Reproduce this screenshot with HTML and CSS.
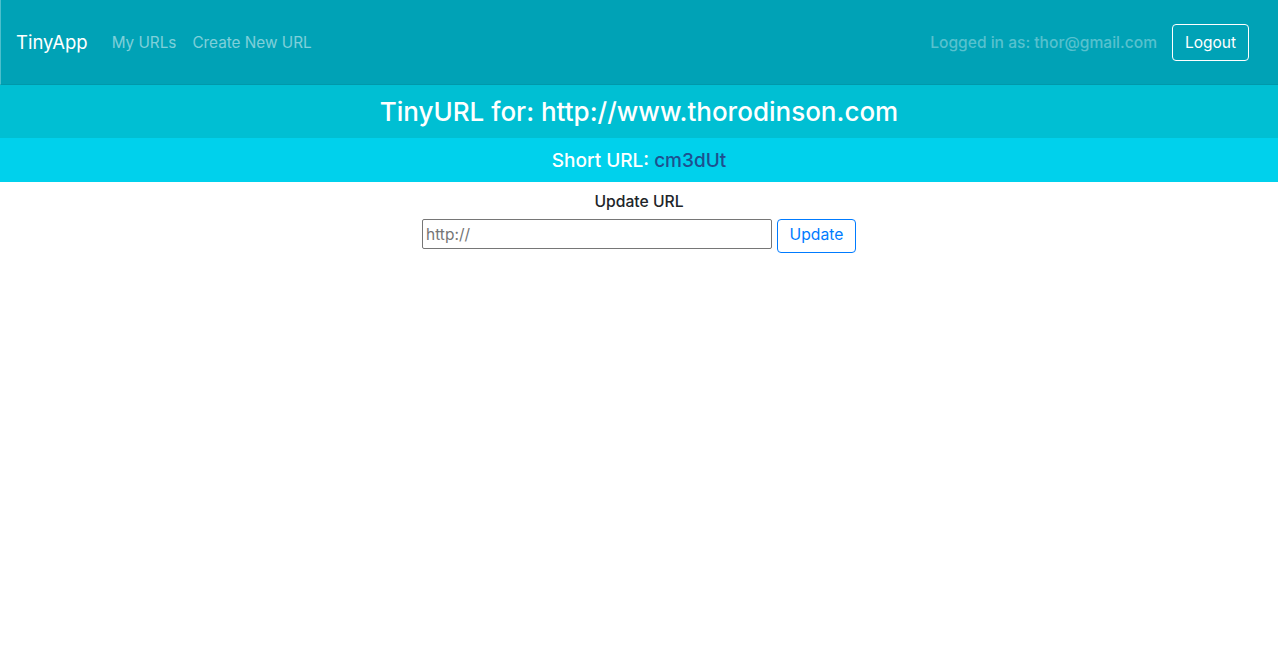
FILE: index.html
```html
<!DOCTYPE html>
<html>
<head>
<meta charset="utf-8">
<title>TinyApp</title>
<link rel="stylesheet" href="styles.css">
</head>
<body>
<nav class="navbar">
  <div class="nav-left">
    <a class="brand" href="#">TinyApp</a>
    <a class="nav-link" href="#">My URLs</a>
    <a class="nav-link" href="#">Create New URL</a>
  </div>
  <div class="nav-right">
    <span class="login-text">Logged in as: thor@gmail.com</span>
    <button class="btn-logout">Logout</button>
  </div>
</nav>
<header class="title-band">
  <h3 class="title">TinyURL for: http://www.thorodinson.com</h3>
</header>
<div class="short-band">
  <span class="short-label">Short URL: <a class="short-link" href="#">cm3dUt</a></span>
</div>
<main class="content">
  <div class="update-label">Update URL</div>
  <form class="update-form">
    <input class="url-input" type="text" placeholder="http://">
    <button class="btn-update" type="button">Update</button>
  </form>
</main>
</body>
</html>
```
FILE: styles.css
```css
* { box-sizing: border-box; }
body {
  margin: 0;
  font-family: Inter, "Noto Sans", "Liberation Sans", sans-serif;
  font-size: 16px;
  color: #212529;
  background: #fff;
}
a { text-decoration: none; }
.navbar {
  height: 85px;
  background: #00a2b6;
  border-bottom: 1px solid #0098ab;
  border-left: 1px solid #4dbfcc;
  display: flex;
  align-items: center;
  justify-content: space-between;
  padding: 0 29px 0 15px;
}
.nav-left { display: flex; align-items: center; }
.brand {
  color: #fff;
  font-size: 18.5px;
  margin-right: 24px;
}
.nav-link {
  color: rgba(255,255,255,0.5);
  font-size: 15.3px;
  margin-right: 16px;
}
.nav-right { display: flex; align-items: center; }
.login-text {
  color: rgba(255,255,255,0.35);
  font-size: 15.6px;
  font-weight: 500;
  margin-right: 15px;
}
.btn-logout {
  font-family: inherit;
  font-size: 15.5px;
  color: #fff;
  background: transparent;
  border: 1px solid #fff;
  border-radius: 4px;
  height: 37px;
  width: 77px;
  padding: 0;
}
.title-band {
  background: #00bfd3;
  height: 53px;
  display: flex;
  align-items: center;
  justify-content: center;
}
.title {
  margin: 0;
  color: #fff;
  font-size: 26px;
  font-weight: 500;
}
.short-band {
  background: #00d1ec;
  height: 44px;
  display: flex;
  align-items: center;
  justify-content: center;
}
.short-label {
  color: #fff;
  font-size: 19px;
  font-weight: 500;
}
.short-link { color: #1e4f8f; }
.content {
  display: flex;
  flex-direction: column;
  align-items: center;
  padding-top: 9px;
}
.update-label {
  font-size: 15.7px;
  font-weight: 500;
  line-height: 22px;
  margin-bottom: 6px;
}
.update-form { display: flex; align-items: flex-start; gap: 5px; }
.url-input {
  width: 350px;
  height: 30px;
  font-family: inherit;
  font-size: 15.5px;
  border: 1px solid #767676;
  border-radius: 2px;
  padding: 0 3px;
}
.url-input::placeholder { color: #757575; }
.btn-update {
  font-family: inherit;
  font-size: 15.7px;
  color: #007bff;
  background: #fff;
  border: 1px solid #007bff;
  border-radius: 4px;
  height: 34px;
  width: 79px;
  padding: 0 0 3px;
}
```
